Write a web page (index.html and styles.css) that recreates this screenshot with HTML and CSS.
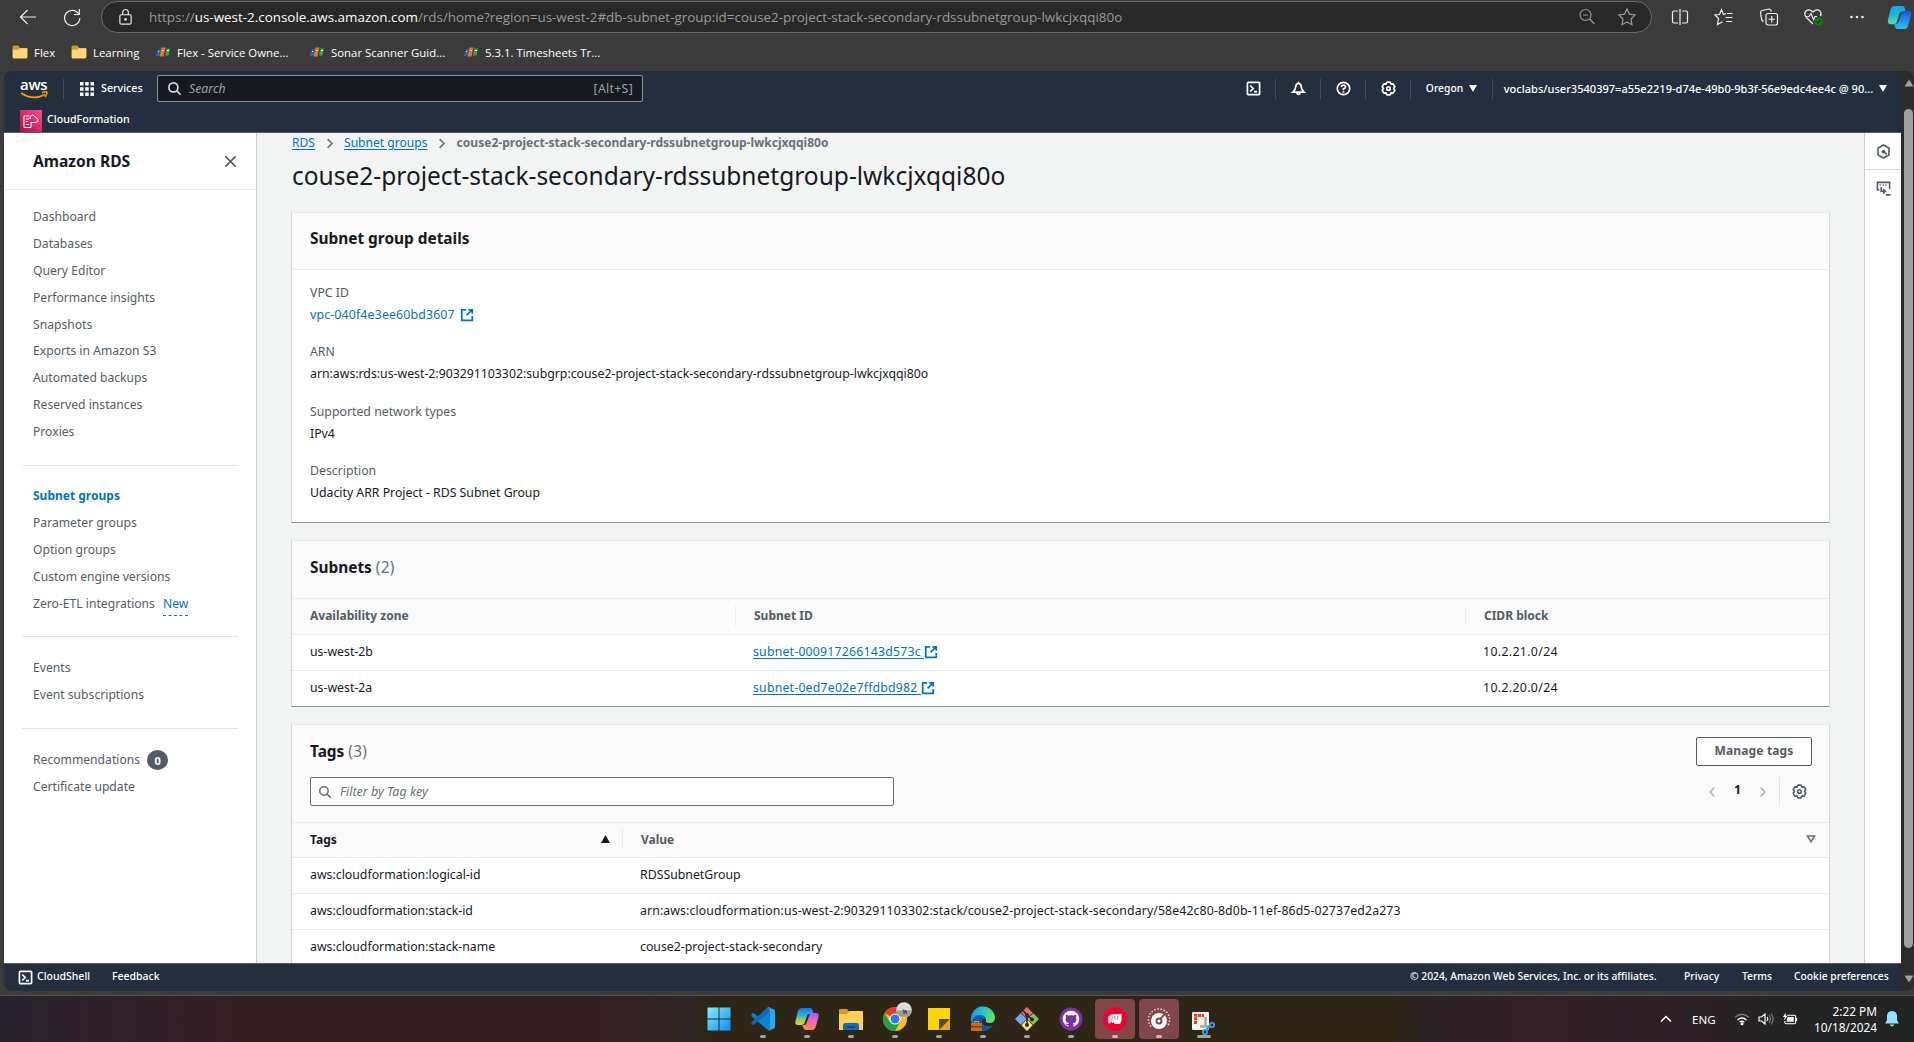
FILE: index.html
```html
<!DOCTYPE html>
<html lang="en">
<head>
<meta charset="utf-8">
<title>Subnet group details - Amazon RDS</title>
<link rel="stylesheet" href="styles.css">
</head>
<body>
<svg class="defs" width="0" height="0" aria-hidden="true">
  <defs>
    <symbol id="i-gear" viewBox="0 0 16 16"><path stroke-linejoin="round" d="M6.300 1.200H9.700L10.700 3.300 13 3.100 14.700 6.100 13.400 8 14.700 9.900 13 12.900 10.700 12.700 9.700 14.800H6.300L5.300 12.700 3 12.900 1.300 9.900 2.600 8 1.300 6.100 3 3.100 5.300 3.300z"/><circle cx="8" cy="8" r="1.900"/></symbol>
    <symbol id="i-ext" viewBox="0 0 16 16"><path d="M7 2H2v12h12V9M9.500 2H14v4.500M14 2 7.500 8.500"/></symbol>
    <symbol id="i-search" viewBox="0 0 16 16"><circle cx="6.800" cy="6.800" r="4.800"/><path d="m10.300 10.300 4.200 4.400"/></symbol>
    <symbol id="i-shell" viewBox="0 0 16 16"><rect x="1.500" y="1.500" width="13" height="13" rx="1"/><path d="m4.500 4.800 3.200 3.200-3.200 3.200M8.500 11.300h3.200"/></symbol>
    <symbol id="i-chev" viewBox="0 0 10 14"><path d="m2 1.500 5.500 5.500L2 12.500"/></symbol>
    <symbol id="i-folder" viewBox="0 0 16 14"><path d="M.5 2Q.5.500 2 .500h4.500L8 3h6.500q1 0 1 1v8q0 1.500-1.500 1.500H2Q.500 13.500.500 12z" fill="#c89a22"/><path d="M.800 4.800H6L8 3.200h6.500q.700 0 .700.800v8q0 1.200-1.200 1.200H2q-1.200 0-1.200-1.200z" fill="#ffd977"/></symbol>
    <symbol id="i-fpt" viewBox="0 0 16 10"><path d="M3 2h3L4.500 9h-4z" fill="#2b5fb4"/><path d="M6.500.500h4l-2 9h-4z" fill="#f0702a"/><path d="M11.500 1.500H15L13.500 8.500H10z" fill="#2eab4f"/><path d="M3 4.500h1M7.500 3.500h1M12 3.500h2" stroke="#fff" stroke-width="1"/></symbol>
  </defs>
</svg>

<div class="toolbar">
  <svg class="tb-ico tb-back" viewBox="0 0 20 20"><path d="M18 10H2.500M9.500 3l-7 7 7 7"/></svg>
  <svg class="tb-ico tb-reload" viewBox="0 0 20 20"><path d="M17 7.500A7.600 7.600 0 1 0 17.800 11M17.300 2v5.500h-5.300"/></svg>
  <div class="address">
    <svg class="tb-ico lock" viewBox="0 0 16 20"><rect x="2" y="7" width="12" height="10" rx="1.500"/><path d="M5 7V4.500a3 3 0 0 1 6 0V7"/><circle cx="8" cy="12" r=".800"/></svg>
    <span class="url">https://<b>us-west-2.console.aws.amazon.com</b>/rds/home?region=us-west-2#db-subnet-group:id=couse2-project-stack-secondary-rdssubnetgroup-lwkcjxqqi80o</span>
    <svg class="tb-ico dim mag" viewBox="0 0 20 20"><circle cx="8.500" cy="8" r="5.500"/><path d="m12.500 12 5 5M6 8h5"/></svg>
    <svg class="tb-ico dim" viewBox="0 0 20 20"><path d="m10 2 2.500 5.200 5.600.800-4.100 4 1 5.700-5-2.700-5 2.700 1-5.700L1.900 8l5.600-.800z"/></svg>
  </div>
  <div class="tb-actions">
    <svg class="tb-ico" viewBox="0 0 20 20"><path d="M8 4H4q-1.500 0-1.500 1.500v9Q2.500 16 4 16h4M12 4h4q1.500 0 1.500 1.500v9Q17.500 16 16 16h-4M10 2v16"/></svg>
    <svg class="tb-ico" viewBox="0 0 20 20"><path d="M12 6.500 9.500 7.500 7.500 2.500 5.500 7.500 1 8l3.500 3.500-1 6 5-2.800M13 6.500h5.500M11.500 10.500h7M12 14.500h6"/></svg>
    <svg class="tb-ico" viewBox="0 0 20 20"><rect x="7" y="6.500" width="11.500" height="11.500" rx="2"/><path d="M12.750 9v6.500M9.500 12.250H16M4.500 14.500Q3 14 2.500 12L1.500 5.500Q1.500 4 3 3.500L10 2q2 0 2.300 2.500"/></svg>
    <svg class="tb-ico" viewBox="0 0 20 20"><path d="M10 17 3 10Q.500 6.500 3 4q3.500-2.500 7 1 3.500-3.500 7-1 2 2.500.500 5M2 9.500h4l2-3 2.500 6 1.500-3h2"/><circle cx="15.500" cy="14.500" r="4.200" fill="#107c10" stroke="none"/><path d="m13.500 14.500 1.500 1.500 2.500-3" stroke="#0a3f0a"/></svg>
    <svg class="tb-ico" viewBox="0 0 20 20"><g fill="#eee" stroke="none"><circle cx="4.500" cy="10" r="1.300"/><circle cx="10" cy="10" r="1.300"/><circle cx="15.500" cy="10" r="1.300"/></g></svg>
  </div>
  <svg class="copilot" viewBox="0 0 26 26"><defs><linearGradient id="cpa" x1="0" y1="0" x2="0" y2="1"><stop offset="0" stop-color="#18a5ea"/><stop offset=".5" stop-color="#19b8d8"/><stop offset="1" stop-color="#5fdc9d"/></linearGradient><linearGradient id="cpb" x1="0" y1="0" x2="0" y2="1"><stop offset="0" stop-color="#1557d8"/><stop offset="1" stop-color="#2ec1fb"/></linearGradient></defs><path d="M8 1h8q2 0 2.500 2l1 4h-4q-2 0-2.600 2l-2.400 8q-.700 3-3.500 3H4q-4 0-3-5L4 4q1-3 4-3z" fill="url(#cpa)"/><path d="M18 6h4q4 0 3 5l-3 10q-1 4-4 4h-7q-2 0-2.600-2L7.500 19.500h2q2 0 2.600-2L15 9q.800-3 3-3z" fill="url(#cpb)"/></svg>
</div>

<div class="bookmarks">
  <span class="bm bm-folder"><svg class="folder"><use href="#i-folder"/></svg>Flex</span>
  <span class="bm bm-folder2"><svg class="folder"><use href="#i-folder"/></svg>Learning</span>
  <span class="bm bm-page"><svg class="fpt"><use href="#i-fpt"/></svg>Flex - Service Owne...</span>
  <span class="bm bm-page"><svg class="fpt"><use href="#i-fpt"/></svg>Sonar Scanner Guid...</span>
  <span class="bm bm-page"><svg class="fpt"><use href="#i-fpt"/></svg>5.3.1. Timesheets Tr...</span>
</div>

<div class="window">
  <div class="console">
    <header class="nav">
      <div class="nav-top">
        <div class="aws"><span>aws</span><svg viewBox="0 0 28 9"><path d="M1 2q12 8 24 1.500" fill="none" stroke="#f90" stroke-width="1.800"/><path d="M22 1.500q5-1.500 5 0T25 6" fill="none" stroke="#f90" stroke-width="1.400"/></svg></div>
        <svg class="grid9" viewBox="0 0 14 14"><path d="M0 0h3.500v3.500H0zM5.200 0h3.500v3.500H5.200zM10.500 0H14v3.500h-3.500zM0 5.200h3.500v3.500H0zM5.200 5.200h3.500v3.500H5.200zM10.500 5.200H14v3.500h-3.500zM0 10.500h3.500V14H0zM5.200 10.500h3.500V14H5.200zM10.500 10.500H14V14h-3.500z"/></svg>
        <span class="services">Services</span>
        <div class="search"><svg class="ico"><use href="#i-search"/></svg><i>Search</i><span>[Alt+S]</span></div>
        <div class="nav-right">
          <span class="cell"><svg class="ico"><use href="#i-shell"/></svg></span>
          <span class="cell"><svg class="ico" viewBox="0 0 16 16"><path d="M8 .800v1.500M8 2.500Q10.800 2.700 11 6.500q.100 3 3 5.300H2Q4.900 9.500 5 6.500 5.200 2.700 8 2.500zM6.300 12.500a1.700 1.700 0 0 0 3.400 0"/></svg></span>
          <span class="cell"><svg class="ico" viewBox="0 0 16 16"><circle cx="8" cy="8" r="6.600"/><path d="M5.800 6.500Q5.900 4.400 8 4.400t2.200 1.900Q10.200 7.300 8 8.300v1.500M8 11v1.500"/></svg></span>
          <span class="cell"><svg class="ico"><use href="#i-gear"/></svg></span>
          <span class="cell region"><span>Oregon</span><svg class="caret" viewBox="0 0 8 7"><path d="M0 0h8L4 7z"/></svg></span>
          <span class="cell user"><span>voclabs/user3540397=a55e2219-d74e-49b0-9b3f-56e9edc4ee4c @ 90...</span><svg class="caret" viewBox="0 0 8 7"><path d="M0 0h8L4 7z"/></svg></span>
        </div>
      </div>
      <div class="nav-fav"><svg class="cfn" viewBox="0 0 22 22"><defs><linearGradient id="pk" x1="0" y1="1" x2="1" y2="0"><stop offset="0" stop-color="#b0084d"/><stop offset="1" stop-color="#ff4f8b"/></linearGradient></defs><path d="M0 0h22v22H0z" fill="url(#pk)"/><path d="M9.500 6H4v11.500h7V12M5.800 9h3.400M5.800 11.500H8M5.800 14.500h3.400M10 9Q9.500 5.500 12.500 5.200q2.500.300 3 2.300 2.500.500 2.500 2.500t-2.500 2.500H11" fill="none" stroke="#fff" stroke-width="1"/></svg><span>CloudFormation</span></div>
    </header>

    <div class="body">
      <nav class="side">
        <div class="side-head"><b>Amazon RDS</b><svg viewBox="0 0 14 14"><path d="m1.500 1.500 11 11M12.500 1.500l-11 11"/></svg></div>
        <div class="side-list">
          <ul><li>Dashboard</li><li>Databases</li><li>Query Editor</li><li>Performance insights</li><li>Snapshots</li><li>Exports in Amazon S3</li><li>Automated backups</li><li>Reserved instances</li><li>Proxies</li></ul>
          <hr>
          <ul><li class="on">Subnet groups</li><li>Parameter groups</li><li>Option groups</li><li>Custom engine versions</li><li>Zero-ETL integrations <span class="new">New</span></li></ul>
          <hr>
          <ul><li>Events</li><li>Event subscriptions</li></ul>
          <hr>
          <ul><li>Recommendations <span class="badge">0</span></li><li>Certificate update</li></ul>
        </div>
      </nav>

      <main class="main">
        <div class="crumbs"><a>RDS</a><svg><use href="#i-chev"/></svg><a>Subnet groups</a><svg><use href="#i-chev"/></svg><b>couse2-project-stack-secondary-rdssubnetgroup-lwkcjxqqi80o</b></div>
        <h1>couse2-project-stack-secondary-rdssubnetgroup-lwkcjxqqi80o</h1>

        <section class="card">
          <div class="card-head"><h2>Subnet group details</h2></div>
          <dl>
            <dt>VPC ID</dt><dd class="link">vpc-040f4e3ee60bd3607 <svg class="ext"><use href="#i-ext"/></svg></dd>
            <dt>ARN</dt><dd>arn:aws:rds:us-west-2:903291103302:subgrp:couse2-project-stack-secondary-rdssubnetgroup-lwkcjxqqi80o</dd>
            <dt>Supported network types</dt><dd>IPv4</dd>
            <dt>Description</dt><dd>Udacity ARR Project - RDS Subnet Group</dd>
          </dl>
        </section>

        <section class="card">
          <div class="card-head"><h2>Subnets <span>(2)</span></h2></div>
          <div class="row subnets th"><span>Availability zone</span><span>Subnet ID</span><span>CIDR block</span></div>
          <div class="row subnets"><span>us-west-2b</span><span><a>subnet-000917266143d573c <svg class="ext"><use href="#i-ext"/></svg></a></span><span class="ids">10.2.21.0/24</span></div>
          <div class="row subnets"><span>us-west-2a</span><span><a>subnet-0ed7e02e7ffdbd982 <svg class="ext"><use href="#i-ext"/></svg></a></span><span class="ids">10.2.20.0/24</span></div>
        </section>

        <section class="card tags-card">
          <div class="tags-head">
            <div class="line"><h2>Tags <span>(3)</span></h2><span class="btn">Manage tags</span></div>
            <div class="line">
              <div class="filter"><svg class="ico"><use href="#i-search"/></svg><i>Filter by Tag key</i></div>
              <div class="pager"><svg class="prev"><use href="#i-chev"/></svg><b>1</b><svg><use href="#i-chev"/></svg><span class="prefs"><svg><use href="#i-gear"/></svg></span></div>
            </div>
          </div>
          <div class="row tags th"><span class="sorted">Tags<svg viewBox="0 0 9 8"><path d="M4.500 0 9 8H0z"/></svg></span><span>Value<svg class="unsorted" viewBox="0 0 10 8"><path d="M1.500 1h7L5 6.800z"/></svg></span></div>
          <div class="row tags"><span>aws:cloudformation:logical-id</span><span>RDSSubnetGroup</span></div>
          <div class="row tags"><span>aws:cloudformation:stack-id</span><span class="stack-arn">arn:aws:cloudformation:us-west-2:903291103302:stack/couse2-project-stack-secondary/58e42c80-8d0b-11ef-86d5-02737ed2a273</span></div>
          <div class="row tags"><span>aws:cloudformation:stack-name</span><span>couse2-project-stack-secondary</span></div>
        </section>
      </main>

      <aside class="rail">
        <span><svg viewBox="0 0 16 16"><path d="m8 1 5.800 3.300v7.400L8 15l-5.800-3.300V4.300z"/><circle cx="8" cy="8" r="2" fill="#545b64" stroke="none"/><path d="m8.500 8.500 3 2.500"/></svg></span>
        <span><svg viewBox="0 0 16 16"><path d="M3.500 9.500H1.500V1.500h13v7M3.800 4.300h1.300M7 4.300h1.300M10 4.300h1.300M10.500 14.800H15.500M5.500 6.500V11h4M7.500 8.500 10 11l-2.500 2.500"/></svg></span>
      </aside>
    </div>

    <footer class="foot">
      <svg class="ico"><use href="#i-shell"/></svg><span class="f-cs">CloudShell</span><span>Feedback</span>
      <span class="f-copy">© 2024, Amazon Web Services, Inc. or its affiliates.</span><span class="f-priv">Privacy</span><span class="f-terms">Terms</span><span class="f-cookie">Cookie preferences</span>
    </footer>
  </div>
  <div class="scroll">
    <svg viewBox="0 0 10 8"><path d="M5 .500 9.500 7.500H.500z"/></svg>
    <div class="thumb"></div>
    <svg viewBox="0 0 10 8"><path d="M5 7.500 9.500.500H.500z"/></svg>
  </div>
</div>

<div class="taskbar">
  <div class="apps">
    <span class="app"><svg viewBox="0 0 24 24"><defs><linearGradient id="win" x1="0" y1="0" x2="1" y2="1"><stop offset="0" stop-color="#84f0ff"/><stop offset="1" stop-color="#0a8cf5"/></linearGradient></defs><path d="M.500.500h11v11h-11zM12.500.500h11v11h-11zM.500 12.500h11v11h-11zM12.500 12.500h11v11h-11z" fill="url(#win)"/></svg></span>
    <span class="app run"><svg viewBox="0 0 24 24"><path d="M17 0 7 9.500 2.500 6 .500 7v2l15 13 3 2V0z" fill="#0b84d2"/><path d="M18 5.500 2.500 18l-2-1v-2L17 .500z" fill="#0a6db4"/><path d="m17 0 6 2.500q1 .500 1 1.500v16q0 1-1 1.500L17 24q1.500-.500 1.500-2V2q0-1.500-1.500-2z" fill="#27a9f2"/></svg></span>
    <span class="app run"><svg viewBox="0 0 24 24"><defs><linearGradient id="ca" x1="0" y1="0" x2="0" y2="1"><stop offset="0" stop-color="#1673ea"/><stop offset=".4" stop-color="#1fb2df"/><stop offset=".7" stop-color="#8cd24c"/><stop offset="1" stop-color="#ffc81f"/></linearGradient><linearGradient id="cb" x1="0" y1="0" x2="0" y2="1"><stop offset="0" stop-color="#9a5df5"/><stop offset=".5" stop-color="#f265b2"/><stop offset="1" stop-color="#ff8b50"/></linearGradient></defs><path d="M7 1h8q2 0 2.500 2l1 4h-4q-2 0-2.600 2l-2 6q-.800 3-3.500 3H3q-3.500 0-2.500-4L3 4q1-3 4-3z" fill="url(#ca)"/><path d="M17 6h4q3.500 0 2.500 4L21 19q-1 4-4 4h-6q-2 0-2.600-2L7 18h2q2 0 2.600-2L14 9q.800-3 3-3z" fill="url(#cb)"/></svg></span>
    <span class="app run"><svg viewBox="0 0 24 24"><path d="M0 3q0-1 1-1h7l2.500 3H23q1 0 1 1v17H0z" fill="#d99a11"/><path d="M0 7h8l2.500-3H23q1 0 1 1v18H0z" fill="#ffcf56"/><path d="M4 23v-4.500Q4 16 6.500 16h11q2.500 0 2.500 2.500V23z" fill="#0f6cb8"/><path d="M8 19h8v2H8z" fill="#0a4c84"/></svg></span>
    <span class="app run"><svg viewBox="0 0 24 24"><circle cx="12" cy="12" r="12" fill="#fbc116"/><path d="M12 12 1.600 6A12 12 0 0 1 22.400 6z" fill="#e33b2e"/><path d="M1.600 6A12 12 0 0 0 12 24l5.200-9L6.800 15z" fill="#24a047"/><circle cx="12" cy="12" r="5.600" fill="#fff"/><circle cx="12" cy="12" r="4.500" fill="#2d7cee"/></svg><svg class="avatar" viewBox="0 0 16 16"><circle cx="8" cy="8" r="7.800" fill="#d9dde0"/><path d="M.500 8.500h15a7.700 7.700 0 0 1-15 1z" fill="#a19c90"/><path d="M6.500 7.500h1l1 1 1.500-.500 1 1v3.500l-1.500-1.500-2 1z" fill="#55534f"/></svg></span>
    <span class="app run"><svg viewBox="0 0 24 24"><path d="M1 1h22v12L12 23H1z" fill="#ffd400"/><path d="M23 12v11H12z" fill="#eda500"/><path d="M12 12h11L12 23z" fill="#4b4948"/></svg></span>
    <span class="app run"><svg viewBox="0 0 24 24"><defs><linearGradient id="ed" x1="0" y1="0" x2="1" y2=".3"><stop offset="0" stop-color="#1788dc"/><stop offset=".5" stop-color="#27bfd8"/><stop offset="1" stop-color="#63e05e"/></linearGradient></defs><path d="M0 12A12 12 0 0 1 24 11q0 5-6 5-4 0-3-3 0-3-4-3-8 0-8 8-3-2-3-6z" fill="url(#ed)"/><path d="M2 18Q0 8 9 8q5 0 6 4-3-1-4 2 0 5 6 5 3 0 5-1-4 6-10 6-7 0-10-6z" fill="#0d5aa8"/><path d="M0 16h11v8H0z" fill="#ca6b12"/><path d="M0 19h11v1.500H0z" fill="#7c3d08"/><path d="M3.500 16v-1.500h4V16" fill="none" stroke="#e69b3b"/></svg></span>
    <span class="app run"><svg viewBox="0 0 24 24"><path d="m12 0 5.700 5.700-5.700 6-5.700-6z" fill="#f06d73"/><path d="m5.700 6.300 6 5.700-6 5.700L0 12z" fill="#78a6f5"/><path d="m18.300 6.300 5.700 5.700-5.700 5.700-6-5.700z" fill="#84c75a"/><path d="m12 12.300 5.700 6L12 24l-5.700-5.700z" fill="#ffe070"/><path d="M8 3.500 12 8v10M12 8l5 4.500" fill="none" stroke="#2b2520" stroke-width="1.500"/><g fill="#2b2520"><circle cx="12" cy="8" r="2"/><circle cx="17" cy="12.500" r="2"/><circle cx="12" cy="18" r="2"/></g></svg></span>
    <span class="app run"><svg viewBox="0 0 24 24"><circle cx="12" cy="12" r="11.500" fill="#7d2fa4"/><circle cx="12" cy="12" r="8.300" fill="#fff"/><path d="M7 7.500 9.500 8.500q2.500-.700 5 0L17 7.500q.500 1.500 0 3 1.500 5-3 5.700.700.800.700 4.300h-5.400V18Q7 18.500 6.500 16.500q1.500 0 3 .500 0-.500.500-.900-4.500-.600-3-5.600-.500-1.500 0-3z" fill="#7d2fa4"/></svg></span>
    <span class="app run hot"><svg viewBox="0 0 24 24"><circle cx="12" cy="12" r="12" fill="#f0002e"/><path d="m5.300 9.500 3.200-2 2-.500 2.500.300 5.500-.600v6.800l-1.500 3.500h-5.500l-.500-2.500-1 1.500-1-.200-.300-2-1.200 2.200-2.200.500z" fill="#fff"/><path d="m9.300 9.500-.500 4M12 9v4M14.800 9v4" stroke="#f0002e" stroke-width=".6"/></svg></span>
    <span class="app run hot"><svg viewBox="0 0 24 24"><path d="M4 19.500A10.600 10.600 0 1 1 20 19.500" fill="none" stroke="#ecdfe0" stroke-width="1.500" stroke-dasharray="1.500 1.700"/><circle cx="12" cy="14" r="8" fill="#fff"/><circle cx="12" cy="14" r="3.500" fill="#80464a"/><circle cx="12" cy="14" r="1.500" fill="#fff"/><path d="m13 12 4.500-4.500" stroke="#80464a" stroke-width="1.800"/></svg></span>
    <span class="app run snip"><svg viewBox="0 0 24 24"><rect x="1" y="5" width="17" height="18" rx="1" fill="#f1f1f1"/><path d="M4.500 17V8.500H13" fill="none" stroke="#d9441e" stroke-width="3" stroke-dasharray="3 .7"/><path d="M14.500 10v10M9 19.500h9" stroke="#a4a9ad" stroke-width="2.500"/><g fill="none" stroke="#2a9fe2" stroke-width="1.800"><circle cx="21" cy="18" r="2.200"/><circle cx="14" cy="25" r="2.200"/><path d="m19 19-4 4"/></g></svg></span>
  </div>
  <div class="tray">
    <svg class="t-chev" viewBox="0 0 12 8"><path d="m1 6.500 5-5 5 5"/></svg>
    <span class="lang">ENG</span>
    <svg viewBox="0 0 16 14"><path d="M1 5.500q7-6.500 14 0" opacity=".4"/><path d="M3.500 8q4.500-4 9 0M5.700 10.200q2.300-2 4.600 0"/><circle cx="8" cy="11.800" r=".900"/></svg>
    <svg viewBox="0 0 16 14"><path d="M1 5v4h2.500L7 12V2L3.500 5zM9 5q1.500 2 0 4"/><path d="M11 3q3 4 0 8M13 1.500q4 5.500 0 11" opacity=".4"/></svg>
    <svg viewBox="0 0 17 14"><path d="M5.500 3H13q1.500 0 1.500 1.500v6Q14.500 12 13 12H4.500Q3 12 3 10.500V9M15.500 6v3"/><path d="M6 5h6.500v5H5V8z" fill="#fff" stroke="none"/><path d="M4 0 1 5h2L2 8.500 6 3.500H3.800z" fill="#fff" stroke="none"/></svg>
    <div class="clock"><span>2:22 PM</span><span>10/18/2024</span></div>
    <svg class="bell" viewBox="0 0 14 16"><path d="M7 0q5 .500 5 5v4l1.800 3.500H.200L2 9V5Q2 .500 7 0zM4.800 13.500h4.400Q8.500 15.500 7 15.500t-2.200-2z"/></svg>
  </div>
</div>
</body>
</html>
```
FILE: styles.css
```css
* { box-sizing: border-box; }
body {
  margin: 0; width: 1914px; height: 1042px; overflow: hidden;
  display: flex; flex-direction: column;
  background: #3b3b3b; color: #16191f;
  font: 12.3px "Noto Sans", sans-serif; white-space: nowrap;
}
svg { flex: none; display: block; overflow: visible; }
.defs { position: absolute; }

/* Browser toolbar */
.toolbar { display: flex; align-items: center; height: 34px; flex: none; font-family: "Open Sans", sans-serif; }
.tb-ico { width: 20px; height: 20px; fill: none; stroke: #f0f0f0; stroke-width: 1.2; }
.tb-back { margin-left: 18px; }
.tb-reload { margin-left: 24px; }
.address {
  display: flex; align-items: center; margin-left: 19px;
  width: 1551px; height: 32px; padding: 0 14px 0 16px;
  border: 1px solid #6c6c6c; border-radius: 16px; background: #282828;
}
.lock { width: 15px; height: 19px; }
.url { margin-left: 16px; font-size: 13.42px; color: #9a9a9a; line-height: 18px; padding-bottom: 1px; }
.url b { font-weight: 400; color: #fff; }
.dim { stroke: #9a9a9a; }
.mag { margin-left: auto; margin-right: 20px; }
.tb-actions { display: flex; gap: 24.3px; margin-left: 18px; }
.copilot { width: 25px; height: 25px; margin-left: 20px; }
.bookmarks {
  display: flex; align-items: center; height: 37px; flex: none; padding: 0 0 1px 12px;
  color: #fff; font: 11.4px "Open Sans", sans-serif;
}
.bm { display: flex; align-items: center; gap: 6px; }
.bm-folder { width: 59px; }
.bm-folder2 { width: 84px; }
.bm-page { width: 154px; }
.folder { width: 16px; height: 14px; }
.fpt { width: 16px; height: 10px; }

/* Window and console shell */
.window { display: flex; height: 920px; flex: none; padding-left: 4px; }
.console {
  display: flex; flex-direction: column; width: 1897px;
  border-radius: 8px 0 0 8px; overflow: hidden; background: #232f3e;
}
.nav { height: 62px; flex: none; border-bottom: 1px solid #545b64; color: #fff; font-size: 10.7px; font-weight: 500; }
.nav-top { display: flex; align-items: center; height: 35px; }
.ico { width: 16px; height: 16px; fill: none; stroke: currentColor; stroke-width: 1.8; }
.aws { width: 44px; height: 20px; margin-left: 16px; border-right: 1px solid #414d5c; font: 600 15px/10px "Open Sans", sans-serif; }
.aws span { display: block; letter-spacing: -.3px; height: 12px; }
.aws svg { width: 28px; height: 9px; }
.grid9 { width: 14px; height: 14px; margin-left: 16px; fill: #fff; }
.services { margin-left: 7px; width: 56px; padding-bottom: 1px; }
.search {
  display: flex; align-items: center; width: 486px; height: 27px; padding: 0 9px;
  border: 1px solid #879596; border-radius: 2px; background: #161920;
  color: #95a5a6; font-size: 12.3px; font-weight: 400;
}
.search .ico { width: 15px; height: 15px; color: #d5dbdb; }
.search i { margin-left: 7px; }
.search span { margin-left: auto; letter-spacing: .3px; }
.nav-right { display: flex; margin-left: auto; height: 20px; }
.cell { display: flex; align-items: center; justify-content: center; width: 45px; border-right: 1px solid #414d5c; }
.cell .ico { width: 15px; height: 15px; }
.cell span { padding-bottom: 1px; }
.region { width: 82px; gap: 6px; font-size: 10.3px; }
.user { width: 408px; border: 0; gap: 6px; font-size: 11.05px; padding-right: 3px; }
.caret { width: 8px; height: 7px; fill: #fff; }
.nav-fav { display: flex; align-items: center; height: 26px; padding: 2px 0 0 16px; gap: 5px; }
.nav-fav span { padding-bottom: 3px; }
.cfn { width: 22px; height: 22px; margin-top: 1px; }

.body { display: flex; height: 830px; flex: none; overflow: hidden; background: #f2f3f3; }

/* Side navigation */
.side { width: 253px; flex: none; background: #fff; border-right: 1px solid #c9cdcd; color: #545b64; }
.side-head { display: flex; align-items: center; justify-content: space-between; height: 57px; padding: 0 19px 0 29px; border-bottom: 1px solid #eaeded; color: #16191f; font-size: 15.6px; }
.side-head b { padding-bottom: 1px; }
.side-head svg { width: 13px; height: 13px; fill: none; stroke: #545b64; stroke-width: 1.8; }
.side-list { padding: 13px 18px 0; font-size: 12.15px; }
ul { list-style: none; margin: 0; padding: 0 11px; }
li { display: flex; align-items: center; height: 26.9px; }
hr { margin: 19.5px 0 17px; border: 0; height: 1px; background: #e2e5e5; }
.on { color: #0073bb; font-weight: 700; font-size: 12px; }
.new { margin-left: 8px; color: #0073bb; height: 24px; line-height: 23px; border-bottom: 1px dashed #0073bb; }
.badge { display: flex; align-items: center; justify-content: center; width: 21px; height: 20px; margin: 2px 0 0 7px; border-radius: 50%; background: #545b64; color: #fff; font-weight: 700; font-size: 11px; }

/* Main content */
.main { width: 1607px; flex: none; padding: 0 34px 0 34px; }
.crumbs { display: flex; align-items: center; height: 19px; gap: 10.5px; padding-left: 1px; font-size: 12.1px; color: #0073bb; }
.crumbs a, .row a { text-decoration: underline; text-underline-offset: 2px; }
.crumbs svg { width: 8px; height: 11px; margin-top: 2px; fill: none; stroke: #687078; stroke-width: 2; }
.crumbs b { font-size: 12.050px; color: #687078; }
h1 { margin: 0 0 15.500px; padding-left: 1px; height: 44px; font-size: 24.5px; font-weight: 400; line-height: 48px; }
h2 { margin: 0; font-size: 15.4px; font-weight: 700; }
h2 span { font-weight: 400; color: #687078; letter-spacing: .3px; }
.card { margin-bottom: 17px; border: 1px solid #d0d5d5; border-top-color: #eaeded; border-bottom-color: #879596; background: #fff; }
.card-head { display: flex; align-items: center; height: 57.5px; padding: 0 18px 4px; background: #fafafa; border-bottom: 1px solid #eaeded; }
dl { margin: 0; padding: 11.500px 18px 2.500px; }
dt { height: 22px; line-height: 22px; color: #545b64; }
dd { margin: 0 0 15.600px; height: 22px; line-height: 21px; letter-spacing: -.01px; }
.link { display: flex; align-items: center; gap: 5px; color: #0073bb; letter-spacing: .17px; }
.ext { display: inline-block; width: 14px; height: 14px; vertical-align: -3px; fill: none; stroke: #0073bb; stroke-width: 2; }
.row { display: grid; align-items: center; height: 36px; padding-bottom: 1px; border-top: 1px solid #eaeded; }
.row > span { padding-left: 18px; }
.row a { color: #0073bb; letter-spacing: .2px; }
.row .ids { letter-spacing: .35px; }
.row .stack-arn { letter-spacing: .11px; }
.card-head + .row { border-top: 0; }
.th { height: 35px; background: #fafafa; color: #545b64; font-weight: 700; font-size: 12px; }
.subnets { grid-template-columns: 443px 730px 1fr; }
.th.subnets > span + span, .th.tags > span + span { border-left: 1px solid #eaeded; height: 20px; line-height: 19px; }
.tags { grid-template-columns: 330px 1fr; }
.tags-head { height: 97px; padding: 12.500px 17px 0 18px; background: #fafafa; }
.line { display: flex; align-items: center; justify-content: space-between; height: 29px; margin-bottom: 11px; }
.btn { width: 116px; height: 29px; border: 1px solid #545b64; border-radius: 2px; background: #fff; color: #545b64; font-weight: 700; font-size: 12px; letter-spacing: .15px; line-height: 26px; text-align: center; }
.filter { display: flex; align-items: center; gap: 8px; width: 584px; height: 29px; padding-left: 7px; border: 1px solid #687078; border-radius: 2px; background: #fff; color: #687078; font-size: 12.5px; }
.filter .ico { width: 14px; height: 14px; }
.pager { display: flex; align-items: center; height: 29px; }
.pager svg { width: 8px; height: 12px; fill: none; stroke: #aab7b8; stroke-width: 2; }
.pager .prev { transform: scaleX(-1); }
.pager b { width: 43px; text-align: center; line-height: 26px; height: 29px; }
.prefs { margin-left: 12px; padding: 7px 5px 0 12px; height: 29px; border-left: 1px solid #e2e5e5; }
.pager .prefs svg { width: 15px; height: 15px; stroke: #545b64; stroke-width: 1.7; }
.th.tags > span { display: flex; align-items: center; justify-content: space-between; padding-right: 12px; }
.sorted { color: #16191f; }
.sorted svg { width: 9px; height: 8px; fill: #16191f; }
.unsorted { width: 10px; height: 8px; margin-right: 1px; fill: none; stroke: #687078; stroke-width: 1.600; }

.rail { width: 37px; flex: none; background: #fff; border-left: 1px solid #c9cdcd; }
.rail span { display: flex; align-items: center; justify-content: center; height: 37px; border-bottom: 1px solid #d5dbdb; }
.rail span + span { border: 0; }
.rail svg { width: 15px; height: 15px; fill: none; stroke: #545b64; stroke-width: 1.7; }

.foot { display: flex; align-items: center; height: 28px; padding: 0 14px 3px; border-top: 1px solid #545b64; color: #fff; font-size: 10.3px; font-weight: 500; }
.foot .ico { width: 15px; height: 15px; margin: 2px 4px 0 0; }
.foot .f-cs { width: 75px; font-size: 10.500px; }
.foot .f-cs + span { font-size: 10.500px; }
.f-copy { margin-left: auto; width: 274px; }
.f-priv { width: 58px; }
.f-terms { width: 52px; }
.f-cookie { width: 93px; }

.scroll { display: flex; flex-direction: column; align-items: center; width: 13px; background: #2c2c2c; border-radius: 0 8px 8px 0; padding: 8px 0 8px 2px; }
.scroll svg { width: 10px; height: 8px; fill: #a0a0a0; }
.thumb { width: 9px; height: 839px; margin: 22px 0 27px; border-radius: 5px; background: #9f9f9f; }

/* Taskbar */
.taskbar {
  display: flex; align-items: center; justify-content: space-between; flex: 1;
  margin-top: 4px; border-top: 1px solid #55524d; padding-left: 699px;
  background: linear-gradient(90deg, #28232e 0, #361e25 230px, #361e25 600px, #2d2622 690px, #2d2616 710px, #2d2616 1390px, #2a2224 1430px, #351f27 1530px, #2d2026 1680px, #222423 1800px, #222423);
}
.apps { display: flex; gap: 4px; }
.app { position: relative; display: flex; justify-content: center; width: 40.02px; height: 40px; padding-top: 8px; border-radius: 4px; }
.app svg { width: 24px; height: 24px; }
.app .avatar { position: absolute; left: 21px; top: 3px; width: 16px; height: 16px; }
.run::after { content: ""; position: absolute; left: 17px; bottom: 1px; width: 6px; height: 3px; border-radius: 2px; background: #a5a39d; }
.hot { background: #80464a; }
.hot::after { background: #ff9fae; }
.snip::after { left: 14px; width: 14px; }
.tray { display: flex; align-items: center; padding-right: 15px; color: #fff; font-size: 11.85px; }
.tray svg { width: 16px; height: 14px; margin-right: 8px; fill: none; stroke: #fff; stroke-width: 1.2; }
.tray .t-chev { width: 12px; height: 8px; margin-right: 20px; stroke-width: 1.500; }
.lang { width: 42px; font-size: 11.5px; }
.clock { display: flex; flex-direction: column; align-items: flex-end; width: 71px; line-height: 16px; margin-right: 8px; }
.tray .bell { width: 14px; height: 16px; margin: 0; fill: #8fe3ff; stroke: none; }
```
